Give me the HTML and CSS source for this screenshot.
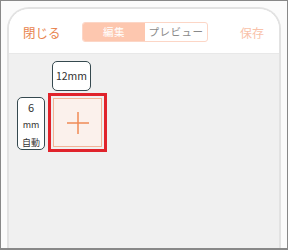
FILE: index.html
```html
<!DOCTYPE html>
<html lang="ja">
<head>
    <meta charset="UTF-8">
    <meta name="viewport" content="width=device-width, initial-scale=1.0">
    <title>編集</title>
    <link rel="stylesheet" href="styles.css">
</head>
<body>
    <div class="screen">
        <div class="phone">
            <div class="header">
                <span class="close">閉じる</span>
                <div class="tabs">
                    <span class="tab active">編集</span>
                    <span class="tab">プレビュー</span>
                </div>
                <span class="save">保存</span>
            </div>
            <div class="canvas">
                <div class="grid">
                    <div class="size-top">12mm</div>
                    <div class="size-left">6<br><small>mm</small><br><small>自動</small></div>
                    <div class="highlight">
                        <div class="cell">
                            <svg width="24" height="24" viewBox="0 0 24 24">
                                <path d="M12 1 V23 M1 12 H23" stroke="#f08a55" stroke-width="1.5" fill="none"/>
                            </svg>
                        </div>
                    </div>
                </div>
            </div>
        </div>
    </div>
</body>
</html>
```
FILE: styles.css
```css
* {
    box-sizing: border-box;
}

body {
    margin: 0;
    font-family: "Noto Sans CJK JP", "Noto Sans", sans-serif;
}

.screen {
    width: 288px;
    height: 250px;
    border: 1px solid #888;
    border-bottom-width: 2px;
    background-color: #fbfbfb;
    padding: 6px 6px 0 6px;
    overflow: hidden;
}

.phone {
    height: 100%;
    border: 2px solid #e2e2e2;
    border-bottom: none;
    border-radius: 22px 22px 0 0;
    background-color: #fff;
    display: flex;
    flex-direction: column;
    overflow: hidden;
}

.header {
    height: 44px;
    flex: none;
    display: flex;
    align-items: center;
    padding: 2px 14px 0 14px;
    background-color: #fff;
}

.close {
    font-size: 12.5px;
    color: #e8844f;
    width: 59px;
}

.tabs {
    display: flex;
    border: 1px solid #fcd6c6;
    border-radius: 3px;
    height: 20px;
    overflow: hidden;
}

.tab {
    width: 62px;
    font-size: 10.5px;
    line-height: 18px;
    text-align: center;
    color: #8a8a8a;
    letter-spacing: 0.5px;
}

.tab.active {
    background-color: #fdc7af;
    color: #fff;
}

.save {
    margin-left: auto;
    margin-right: 1px;
    font-size: 12px;
    color: #f9c2aa;
}

.canvas {
    flex: 1;
    background-color: #f0f0f0;
    border-top: 1px solid #e8e8e8;
    padding: 7px 0 0 8px;
}

.grid {
    display: grid;
    grid-template-columns: 28px 59px;
    grid-template-rows: 30px 59px;
    column-gap: 3px;
    row-gap: 2px;
}

.size-top,
.size-left {
    background-color: #fff;
    border: 1px solid #35494f;
    border-radius: 5px;
    color: #333;
    text-align: center;
}

.size-top {
    grid-column: 2;
    width: 39px;
    margin-left: 4px;
    font-size: 10.5px;
    line-height: 28px;
}

.size-left {
    grid-row: 2;
    align-self: start;
    height: 53px;
    margin-top: 4px;
    font-size: 11px;
    line-height: 16px;
    padding-top: 1px;
}

.size-left small {
    font-size: 9px;
}

.highlight {
    border: 3px solid #e0232b;
    padding: 2px;
}

.cell {
    height: 100%;
    border: 1px solid #f4b496;
    background-color: #fbf1ec;
    display: flex;
    align-items: center;
    justify-content: center;
}
```
